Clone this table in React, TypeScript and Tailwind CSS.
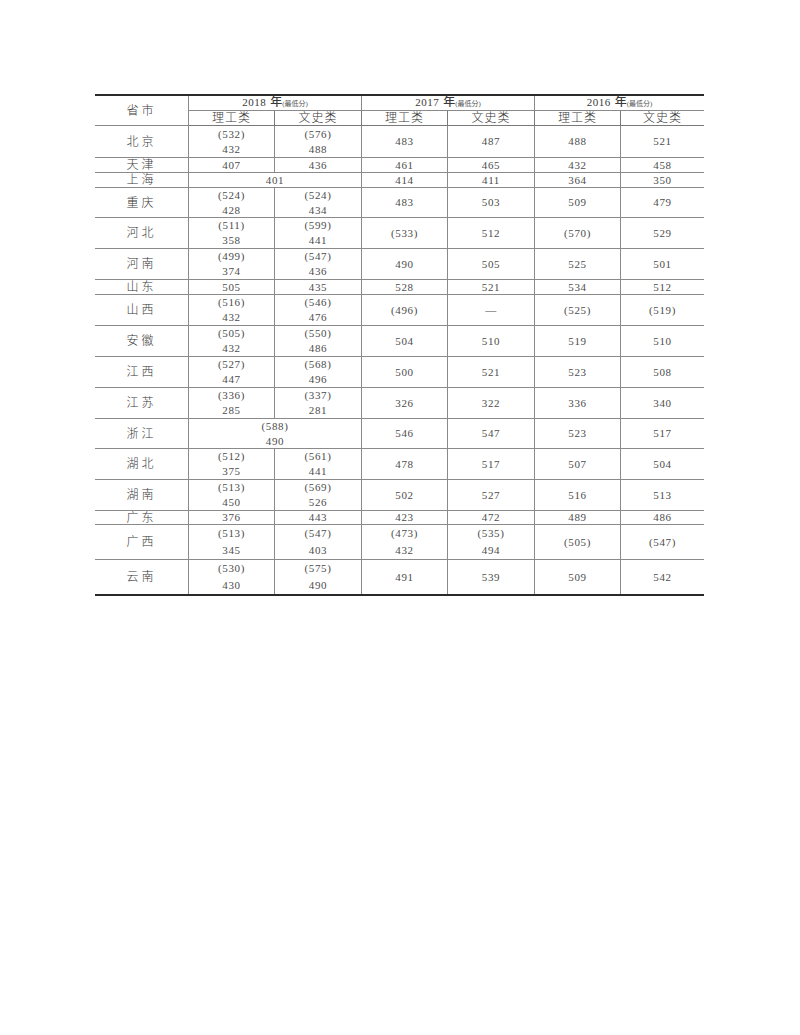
import React from "react";

type Cell = string | string[] | { span: number; v: string | string[] };

const rows: { name: string; cells: Cell[] }[] = [
  { name: "北京", cells: [["(532)", "432"], ["(576)", "488"], "483", "487", "488", "521"] },
  { name: "天津", cells: ["407", "436", "461", "465", "432", "458"] },
  { name: "上海", cells: [{ span: 2, v: "401" }, "414", "411", "364", "350"] },
  { name: "重庆", cells: [["(524)", "428"], ["(524)", "434"], "483", "503", "509", "479"] },
  { name: "河北", cells: [["(511)", "358"], ["(599)", "441"], "(533)", "512", "(570)", "529"] },
  { name: "河南", cells: [["(499)", "374"], ["(547)", "436"], "490", "505", "525", "501"] },
  { name: "山东", cells: ["505", "435", "528", "521", "534", "512"] },
  { name: "山西", cells: [["(516)", "432"], ["(546)", "476"], "(496)", "—", "(525)", "(519)"] },
  { name: "安徽", cells: [["(505)", "432"], ["(550)", "486"], "504", "510", "519", "510"] },
  { name: "江西", cells: [["(527)", "447"], ["(568)", "496"], "500", "521", "523", "508"] },
  { name: "江苏", cells: [["(336)", "285"], ["(337)", "281"], "326", "322", "336", "340"] },
  { name: "浙江", cells: [{ span: 2, v: ["(588)", "490"] }, "546", "547", "523", "517"] },
  { name: "湖北", cells: [["(512)", "375"], ["(561)", "441"], "478", "517", "507", "504"] },
  { name: "湖南", cells: [["(513)", "450"], ["(569)", "526"], "502", "527", "516", "513"] },
  { name: "广东", cells: ["376", "443", "423", "472", "489", "486"] },
  { name: "广西", cells: [["(513)", "345"], ["(547)", "403"], ["(473)", "432"], ["(535)", "494"], "(505)", "(547)"] },
  { name: "云南", cells: [["(530)", "430"], ["(575)", "490"], "491", "539", "509", "542"] },
];

const font = { fontFamily: '"Liberation Serif", "Noto Sans CJK SC", serif' };

function Lines({ v, tall }: { v: string | string[]; tall: boolean }) {
  const arr = Array.isArray(v) ? v : [v];
  return (
    <>
      {arr.map((s, i) => (
        <span
          key={i}
          className={`${tall ? "leading-[17px]" : "leading-[15px]"} text-[11px] tracking-[0.6px] text-[#4d4d4d]`}
        >
          {s}
        </span>
      ))}
    </>
  );
}

export default function App() {
  const total = rows.length;
  return (
    <div className="min-h-[1035px] w-[800px] bg-white pt-[94px] pl-[95px]" style={font}>
      <div className="grid w-[609px] grid-cols-[94px_86px_87px_86px_87px_86px_83px] grid-rows-[15px_15px_32px_15px_15px_30px_31px_31px_15px_31px_31px_31px_31px_30px_31px_31px_14px_35px_34px] border-t-2 border-b-2 border-[#2a2a2a]">
        <div className="row-span-2 flex items-center justify-center border-r border-b border-[#8a8a8a] text-[12px] font-light tracking-[3px] text-[#3a3a3a]">
          省市
        </div>
        {["2018", "2017", "2016"].map((y, i) => (
          <div
            key={y}
            className={`col-span-2 flex items-end justify-center border-b border-[#8a8a8a] pb-[1px] text-[#3a3a3a] ${i < 2 ? "border-r" : ""}`}
          >
            <span className="text-[11px] leading-[13px] tracking-[0.5px]">{y}</span>
            <span className="ml-[4px] text-[12px] leading-[13px] font-medium">年</span>
            <span className="text-[7px] leading-[9px] text-[#555]">(最低分)</span>
          </div>
        ))}
        {[0, 1, 2, 3, 4, 5].map((i) => (
          <div
            key={i}
            className={`flex items-center justify-center border-b-[1.5px] border-[#7a7a7a] text-[12px] font-light leading-[14px] tracking-[1px] text-[#3a3a3a] ${i < 5 ? "border-r" : ""}`}
          >
            {i % 2 === 0 ? "理工类" : "文史类"}
          </div>
        ))}
        {rows.map((r, ri) => {
          const last = ri === total - 1;
          const tall = r.name === "广西" || r.name === "云南";
          const bb = last ? "" : r.name === "广东" ? "border-b-[1.5px]" : "border-b";
          let col = 1;
          return (
            <React.Fragment key={r.name}>
              <div
                className={`flex items-center justify-center border-r border-[#8a8a8a] text-[12px] font-light tracking-[3px] text-[#3a3a3a] ${bb}`}
              >
                {r.name}
              </div>
              {r.cells.map((c, ci) => {
                const isSpan = typeof c === "object" && !Array.isArray(c);
                const span = isSpan ? (c as { span: number }).span : 1;
                col += span;
                const v = isSpan ? (c as { v: string | string[] }).v : (c as string | string[]);
                return (
                  <div
                    key={ci}
                    className={`flex flex-col items-center justify-center border-[#8a8a8a] ${bb} ${span === 2 ? "col-span-2" : ""} ${col < 7 ? "border-r" : ""}`}
                  >
                    <Lines v={v} tall={tall} />
                  </div>
                );
              })}
            </React.Fragment>
          );
        })}
      </div>
    </div>
  );
}
